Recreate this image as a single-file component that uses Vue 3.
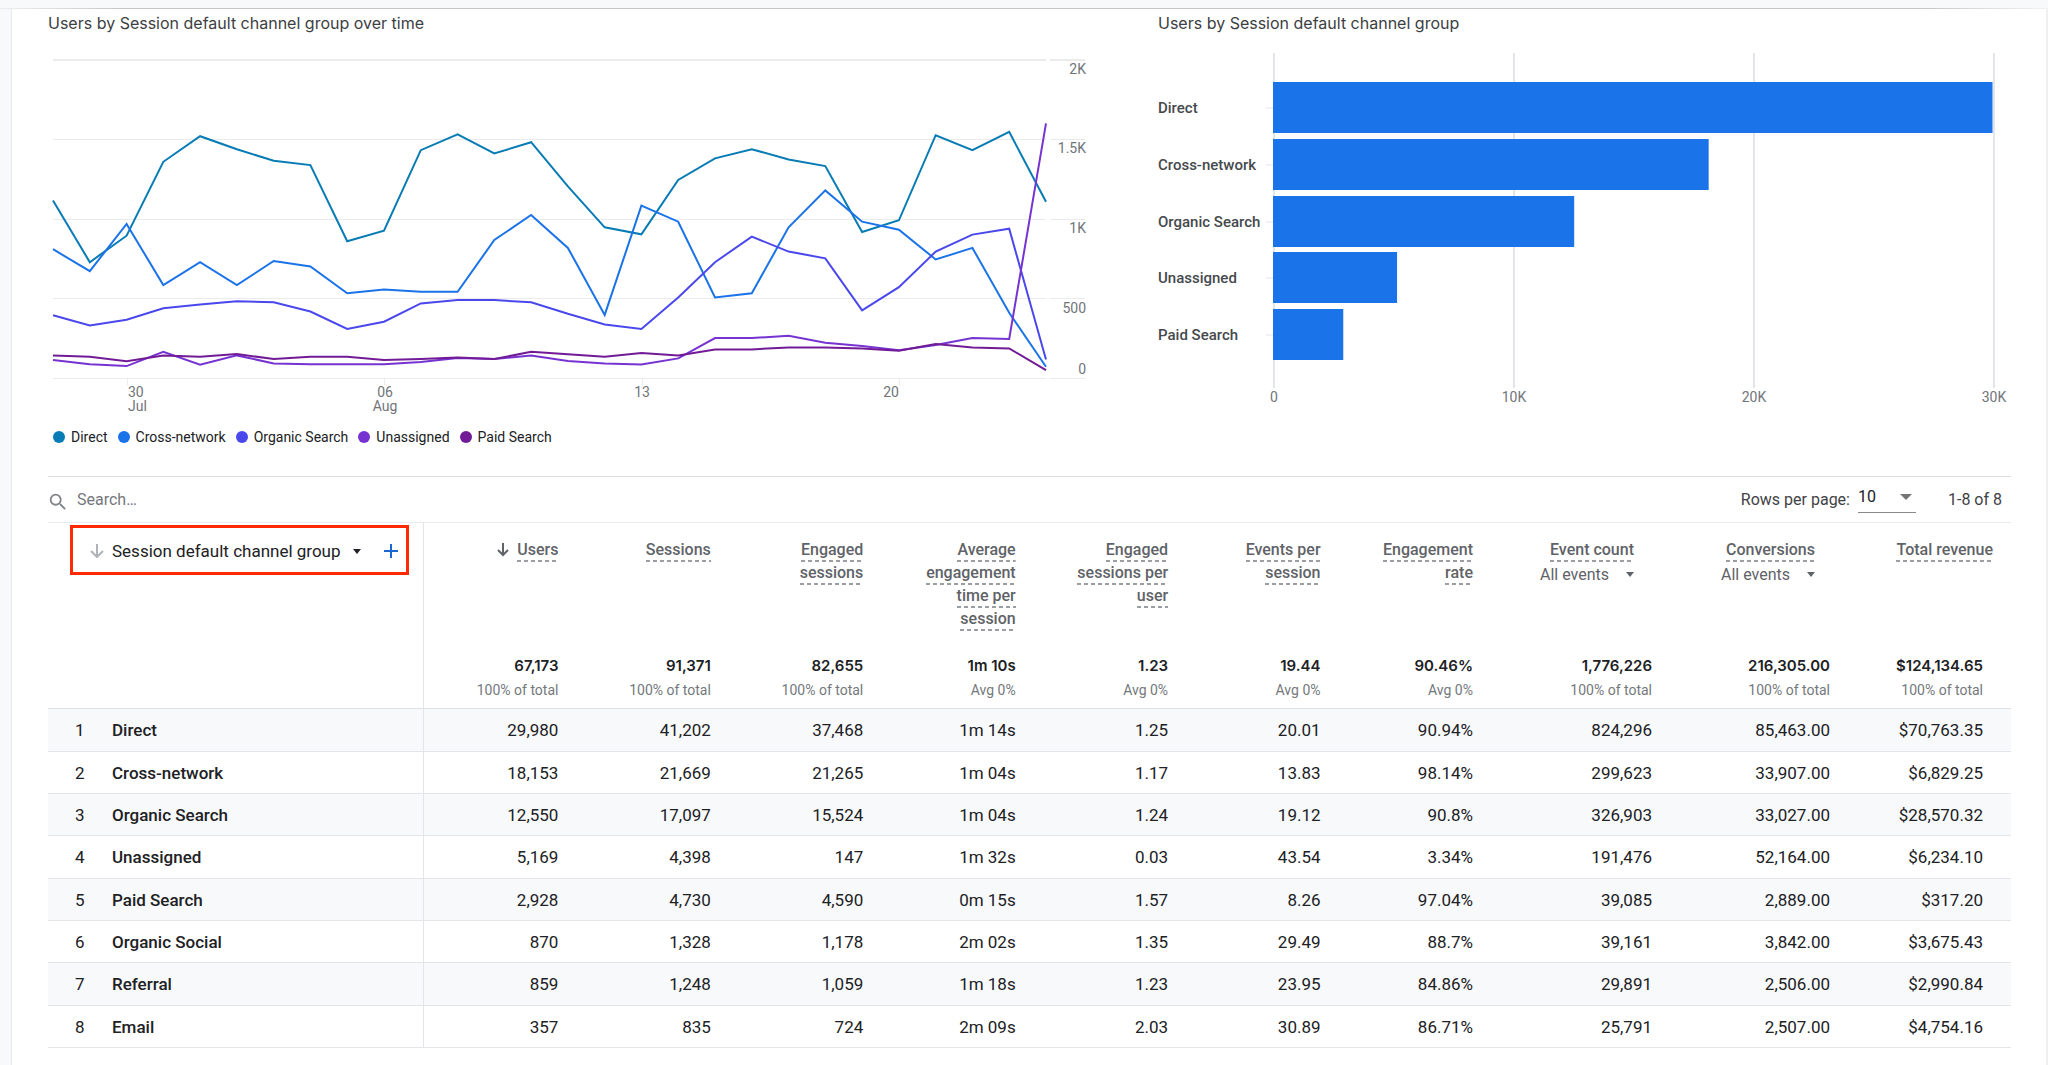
<script setup>
import { ref } from 'vue'

const search = ref('')
const rowsPerPage = ref('10')

const PLOT = { left: 5, right: 998, top: 23, bottom: 341, max: 2000 }

const series = [
  {
    name: 'Direct',
    color: '#077bb4',
    values: [1117, 728, 895, 1360, 1521, 1439, 1366, 1339, 860, 927, 1433, 1533, 1412, 1483, 1205, 948, 904, 1245, 1381, 1439, 1374, 1333, 918, 992, 1527, 1433, 1548, 1109]
  },
  {
    name: 'Cross-network',
    color: '#1a73e8',
    values: [810, 672, 969, 584, 728, 584, 736, 701, 533, 556, 542, 542, 868, 1025, 818, 397, 1084, 983, 506, 533, 948, 1180, 983, 933, 745, 818, 410, 71]
  },
  {
    name: 'Organic Search',
    color: '#4a48ec',
    values: [395, 331, 366, 439, 462, 483, 477, 418, 308, 354, 469, 490, 490, 477, 404, 337, 308, 506, 728, 889, 795, 753, 425, 571, 795, 902, 939, 117]
  },
  {
    name: 'Unassigned',
    color: '#7633d1',
    values: [113, 86, 75, 165, 84, 142, 92, 86, 86, 86, 100, 126, 119, 142, 107, 92, 84, 123, 251, 251, 266, 222, 201, 174, 207, 251, 245, 1602]
  },
  {
    name: 'Paid Search',
    color: '#721b96',
    values: [142, 134, 105, 142, 134, 151, 119, 134, 134, 113, 119, 128, 119, 165, 149, 134, 157, 142, 180, 180, 192, 192, 186, 172, 213, 192, 186, 50]
  }
]

function points(values) {
  const step = (PLOT.right - PLOT.left) / (values.length - 1)
  const scale = (PLOT.bottom - PLOT.top) / PLOT.max
  return values
    .map((v, i) => `${(PLOT.left + i * step).toFixed(1)},${(PLOT.bottom - v * scale).toFixed(1)}`)
    .join(' ')
}

const yTicks = [
  { label: '2K', y: 23, text: 37 },
  { label: '1.5K', y: 102, text: 116 },
  { label: '1K', y: 182, text: 196 },
  { label: '500', y: 261, text: 276 },
  { label: '0', y: 341, text: 337 }
]

const xTicks = [
  { x: 79, text: 80, anchor: 'start', day: '30', month: 'Jul' },
  { x: 336, text: 337, anchor: 'middle', day: '06', month: 'Aug' },
  { x: 594, text: 594, anchor: 'middle', day: '13', month: '' },
  { x: 851, text: 851, anchor: 'end', day: '20', month: '' }
]

const bars = [
  { name: 'Direct', value: 29980, y: 45 },
  { name: 'Cross-network', value: 18153, y: 102 },
  { name: 'Organic Search', value: 12550, y: 159 },
  { name: 'Unassigned', value: 5169, y: 215 },
  { name: 'Paid Search', value: 2928, y: 272 }
]
const barTicks = ['0', '10K', '20K', '30K']

const metrics = [
  { label: 'Users', total: '67,173', note: '100% of total', sorted: true },
  { label: 'Sessions', total: '91,371', note: '100% of total' },
  { label: 'Engaged sessions', total: '82,655', note: '100% of total' },
  { label: 'Average engagement time per session', total: '1m 10s', note: 'Avg 0%' },
  { label: 'Engaged sessions per user', total: '1.23', note: 'Avg 0%' },
  { label: 'Events per session', total: '19.44', note: 'Avg 0%' },
  { label: 'Engagement rate', total: '90.46%', note: 'Avg 0%' },
  { label: 'Event count', total: '1,776,226', note: '100% of total', filter: 'All events', kind: 'events' },
  { label: 'Conversions', total: '216,305.00', note: '100% of total', filter: 'All events', kind: 'conversions' },
  { label: 'Total revenue', total: '$124,134.65', note: '100% of total', kind: 'revenue' }
]

const rows = [
  { name: 'Direct', cells: ['29,980', '41,202', '37,468', '1m 14s', '1.25', '20.01', '90.94%', '824,296', '85,463.00', '$70,763.35'] },
  { name: 'Cross-network', cells: ['18,153', '21,669', '21,265', '1m 04s', '1.17', '13.83', '98.14%', '299,623', '33,907.00', '$6,829.25'] },
  { name: 'Organic Search', cells: ['12,550', '17,097', '15,524', '1m 04s', '1.24', '19.12', '90.8%', '326,903', '33,027.00', '$28,570.32'] },
  { name: 'Unassigned', cells: ['5,169', '4,398', '147', '1m 32s', '0.03', '43.54', '3.34%', '191,476', '52,164.00', '$6,234.10'] },
  { name: 'Paid Search', cells: ['2,928', '4,730', '4,590', '0m 15s', '1.57', '8.26', '97.04%', '39,085', '2,889.00', '$317.20'] },
  { name: 'Organic Social', cells: ['870', '1,328', '1,178', '2m 02s', '1.35', '29.49', '88.7%', '39,161', '3,842.00', '$3,675.43'] },
  { name: 'Referral', cells: ['859', '1,248', '1,059', '1m 18s', '1.23', '23.95', '84.86%', '29,891', '2,506.00', '$2,990.84'] },
  { name: 'Email', cells: ['357', '835', '724', '2m 09s', '2.03', '30.89', '86.71%', '25,791', '2,507.00', '$4,754.16'] }
]
</script>

<template>
  <div class="page">
    <div class="topbar"></div>
    <main class="card">
      <div class="charts">
        <section>
          <h2 class="title">Users by Session default channel group over time</h2>
          <svg class="chart" viewBox="0 0 1038 385" role="img" aria-label="Users over time">
            <g v-for="(t, i) in yTicks" :key="t.label">
              <path :d="`M5 ${t.y}H998M1002 ${t.y}H1037`" class="grid" :class="{ strong: i === 0 }" />
              <text :y="t.text" x="1038" text-anchor="end" class="axis">{{ t.label }}</text>
            </g>
            <g v-for="t in xTicks" :key="t.day">
              <path :d="`M${t.x} 341v7`" class="grid" />
              <text :x="t.text" y="360" :text-anchor="t.anchor" class="axis">{{ t.day }}</text>
              <text v-if="t.month" :x="t.text" y="374" :text-anchor="t.anchor" class="axis">{{ t.month }}</text>
            </g>
            <polyline v-for="s in series" :key="s.name" :points="points(s.values)" :stroke="s.color" class="line" />
          </svg>
          <ul class="legend">
            <li v-for="s in series" :key="s.name">
              <svg width="12" height="12" viewBox="0 0 12 12" aria-hidden="true"><circle cx="6" cy="6" r="6" :fill="s.color" /></svg>
              {{ s.name }}
            </li>
          </ul>
        </section>

        <section>
          <h2 class="title">Users by Session default channel group</h2>
          <svg class="chart" viewBox="0 0 853 385" role="img" aria-label="Users by channel group">
            <g v-for="(t, i) in barTicks" :key="t">
              <path :d="`M${116 + i * 240} 16V351`" class="bar-grid" />
              <text :x="116 + i * 240" y="365" text-anchor="middle" class="axis">{{ t }}</text>
            </g>
            <g v-for="b in bars" :key="b.name">
              <path :d="`M108 ${b.y + 26}h8`" class="bar-tick" />
              <rect x="115" :y="b.y" :width="b.value * 0.024" height="51" fill="#1a73e8" />
              <text x="0" :y="b.y + 31" class="bar-label">{{ b.name }}</text>
            </g>
          </svg>
        </section>
      </div>

      <div class="toolbar">
        <label class="search">
          <svg width="24" height="24" viewBox="0 0 24 24" aria-hidden="true">
            <path fill="#80868b" d="M15.5 14h-.79l-.28-.27A6.47 6.47 0 0 0 16 9.5 6.5 6.5 0 1 0 9.5 16c1.61 0 3.09-.59 4.23-1.57l.27.28v.79l5 4.99L20.49 19l-4.99-5zm-6 0C7.01 14 5 11.99 5 9.5S7.01 5 9.5 5 14 7.01 14 9.5 11.99 14 9.5 14z" />
          </svg>
          <input v-model="search" type="text" placeholder="Search…" aria-label="Search" />
        </label>
        <div class="pager">
          <label for="rows-per-page">Rows per page:</label>
          <span class="select">
            <select id="rows-per-page" v-model="rowsPerPage">
              <option>10</option>
              <option>25</option>
              <option>50</option>
            </select>
            <svg width="12" height="6" viewBox="0 0 12 6" aria-hidden="true"><path d="M0 0h12L6 6z" fill="#757575" /></svg>
          </span>
          <span class="range">1-8 of 8</span>
        </div>
      </div>

      <table>
        <colgroup>
          <col class="col-index" />
          <col class="col-name" />
          <col v-for="m in metrics" :key="m.label" :class="m.kind ? `col-${m.kind}` : ''" />
        </colgroup>
        <thead>
          <tr class="heads">
            <th colspan="2" scope="col" class="dimension">
              <div class="highlight">
                <svg width="14" height="14" viewBox="0 0 14 14" aria-hidden="true"><path d="M7 0v12M1 7l6 6 6-6" fill="none" stroke="#b0b3b6" stroke-width="2" /></svg>
                <button type="button" class="picker">
                  Session default channel group
                  <svg width="8" height="5" viewBox="0 0 8 5" aria-hidden="true"><path d="M0 0h8L4 5z" fill="#202124" /></svg>
                </button>
                <button type="button" class="add" aria-label="Add dimension">
                  <svg width="14" height="14" viewBox="0 0 14 14" aria-hidden="true"><path d="M7 0v14M0 7h14" stroke="#1a67d2" stroke-width="2" /></svg>
                </button>
              </div>
            </th>
            <th v-for="m in metrics" :key="m.label" scope="col" class="metric" :class="m.kind">
              <svg v-if="m.sorted" class="sort" width="12" height="14" viewBox="0 0 12 14" aria-hidden="true"><path d="M6 0v12M1 7l5 5 5-5" fill="none" stroke="#5f6368" stroke-width="2" /></svg>
              <span class="term">{{ m.label }}</span>
              <button v-if="m.filter" type="button" class="filter">
                {{ m.filter }}
                <svg width="8" height="5" viewBox="0 0 8 5" aria-hidden="true"><path d="M0 0h8L4 5z" fill="#5f6368" /></svg>
              </button>
            </th>
          </tr>
          <tr class="totals">
            <td colspan="2" class="dimension"></td>
            <td v-for="m in metrics" :key="m.label" :class="m.kind">
              <div class="total">{{ m.total }}</div>
              <div class="note">{{ m.note }}</div>
            </td>
          </tr>
        </thead>
        <tbody>
          <tr v-for="(r, i) in rows" :key="r.name">
            <td class="index">{{ i + 1 }}</td>
            <th scope="row" class="name">{{ r.name }}</th>
            <td v-for="(c, j) in r.cells" :key="j" :class="metrics[j].kind">{{ c }}</td>
          </tr>
        </tbody>
      </table>
    </main>
  </div>
</template>

<style>
body {
  margin: 0;
  background: #f8f9fb;
}
</style>

<style scoped>
.page {
  box-sizing: border-box;
  display: flex;
  flex-direction: column;
  min-height: 100vh;
  font-family: Roboto, "Liberation Sans", sans-serif;
  font-size: 17px;
  color: #202124;
}
.topbar {
  height: 9px;
  background: linear-gradient(90deg, #eceded, #c6c7c9 6%, #c6c7c9 94%, #f1f2f3) bottom / 100% 1px no-repeat;
}
.card {
  flex: 1;
  margin-left: 11px;
  padding: 0 35px 17px 36px;
  background: #fff;
  border-left: 1px solid #e6e8eb;
  border-right: 2px solid #eff0f2;
}
.charts {
  display: grid;
  grid-template-columns: 1038fr 853fr;
  column-gap: 72px;
  padding-bottom: 29px;
  border-bottom: 1px solid #dcdee2;
}
.title {
  margin: 0;
  font: 400 16px/28px Inter, sans-serif;
  color: #3c4043;
}
.chart {
  display: block;
  width: 100%;
  overflow: visible;
}
.grid {
  stroke: #ebebeb;
  stroke-width: 1;
  shape-rendering: crispEdges;
}
.grid.strong {
  stroke-width: 2;
}
.axis {
  font-size: 14px;
  fill: #70757a;
}
.line {
  fill: none;
  stroke-width: 2;
}
.bar-grid {
  stroke: #e4e5ea;
  stroke-width: 2;
}
.bar-tick {
  stroke: #e4e5ea;
}
.bar-label {
  font-size: 15px;
  font-weight: 500;
  fill: #45494d;
}
.legend {
  display: flex;
  gap: 10px;
  margin: 5px 0 0;
  padding: 0 0 0 5px;
  list-style: none;
  font-size: 14px;
  line-height: 20px;
}
.legend li {
  display: flex;
  align-items: center;
  gap: 6px;
}
.toolbar {
  display: flex;
  justify-content: space-between;
  align-items: center;
  height: 45px;
  border-bottom: 1px solid #e8eaed;
  font-size: 16px;
}
.search {
  display: flex;
  align-items: center;
  gap: 8px;
}
.search svg {
  width: 22px;
  height: 22px;
  margin-top: 4px;
  margin-left: -1px;
}
.search input {
  width: 320px;
  padding: 0;
  border: 0;
  outline: 0;
  background: none;
  font: inherit;
  color: #5f6368;
}
.search input::placeholder {
  color: #74787c;
  opacity: 1;
}
.pager {
  display: flex;
  align-items: center;
  padding-right: 9px;
  color: #3f4246;
}
.select {
  display: flex;
  align-items: center;
  margin-left: 8px;
  height: 26px;
  border-bottom: 1px solid #8a8a8a;
}
.select select {
  width: 58px;
  height: 24px;
  padding: 0 0 6px;
  border: 0;
  outline: 0;
  background: none;
  appearance: none;
  font: inherit;
  color: #202124;
}
.select svg {
  margin: 0 4px 4px -16px;
  pointer-events: none;
}
.range {
  margin-left: 32px;
}
table {
  width: 100%;
  border-collapse: separate;
  border-spacing: 0;
  table-layout: fixed;
}
.col-index {
  width: 64px;
}
.col-name {
  width: 312px;
}
.col-events {
  width: 179px;
}
.col-conversions {
  width: 178px;
}
.col-revenue {
  width: 163px;
}
th,
td {
  box-sizing: border-box;
  padding: 0 18px 0 0;
  text-align: right;
  font-weight: 400;
}
td.revenue {
  padding-right: 28px;
}
.dimension,
.name {
  border-right: 1px solid #e3e5e8;
}
.heads th {
  height: 130px;
  padding-top: 15px;
  vertical-align: top;
}
.heads .dimension {
  padding: 2px 0 0 22px;
}
.highlight {
  box-sizing: border-box;
  display: flex;
  align-items: center;
  width: 339px;
  height: 50px;
  padding: 2px 8px 0 17px;
  border: 3px solid #ff2a04;
}
.highlight button,
.filter {
  display: flex;
  align-items: center;
  padding: 0;
  border: 0;
  background: none;
  font: inherit;
  color: inherit;
}
.picker {
  flex: 1;
  gap: 12px;
  margin-left: 8px;
}
.heads .metric {
  padding-left: 20px;
  font-size: 16px;
  line-height: 23px;
  color: #5f6368;
}
.heads .events {
  padding-right: 36px;
}
.heads .conversions {
  padding-right: 33px;
}
.heads .revenue {
  padding-right: 18px;
}
.term {
  padding-bottom: 3px;
  background: repeating-linear-gradient(90deg, #9a9ea3 0 4px, transparent 4px 7px) bottom / 100% 2px no-repeat;
  box-decoration-break: clone;
  -webkit-box-decoration-break: clone;
  font-weight: 500;
}
.sort {
  margin-right: 8px;
  vertical-align: -2px;
}
.heads .filter {
  gap: 17px;
  margin: 2px 0 0 auto;
}
.totals td {
  height: 56px;
  padding-bottom: 6px;
  border-bottom: 1px solid #dfe1e4;
}
.total {
  font: 600 15px/26px Inter, sans-serif;
}
.note {
  font-size: 14px;
  line-height: 23px;
  color: #74787c;
}
tbody tr {
  height: 42px;
}
tbody tr:nth-child(3n + 1) {
  height: 43px;
}
tbody td,
tbody th {
  border-bottom: 1px solid #e3e5e8;
}
tbody tr:nth-child(odd) {
  background: #f8f9fb;
}
tbody .index {
  padding-left: 27px;
  text-align: left;
}
tbody .name {
  text-align: left;
  font-weight: 500;
}
</style>
